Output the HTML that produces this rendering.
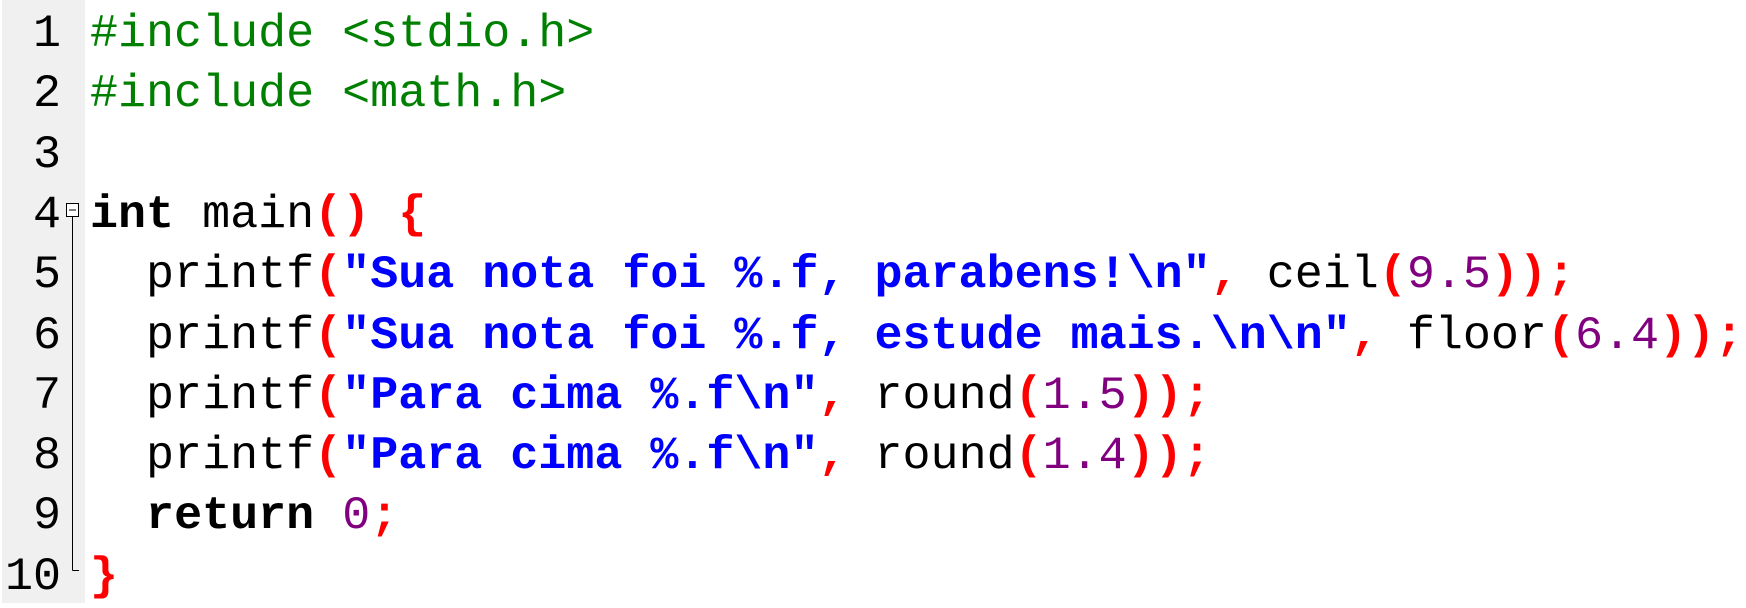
<!DOCTYPE html>
<html><head><style>
body{margin:0;width:1746px;height:603px;background:#fff;overflow:hidden;position:relative;font-family:"Liberation Mono","DejaVu Sans Mono",monospace;font-size:46.7px;}
#g{position:absolute;left:2px;top:0;width:83px;height:603px;background:#f0f0f0;}
.l{position:absolute;left:0;height:60.3px;line-height:60.3px;white-space:pre;margin-top:5px;}
.n{width:61px;text-align:right;color:#000;}
.c{left:90px;}
.p{color:#008000}.s{color:#0000ff;font-weight:bold}.o{color:#ff0000;font-weight:bold}.d{color:#800080}.k{font-weight:bold;color:#000}
</style></head><body>
<div id="g"></div>
<svg style="position:absolute;left:0;top:0" width="120" height="603"><rect x="66.5" y="203.5" width="12" height="13" fill="#fff" stroke="#000"/><line x1="69" y1="210" x2="76" y2="210" stroke="#000"/><line x1="72.5" y1="217" x2="72.5" y2="570.5" stroke="#000"/><line x1="72.5" y1="570.5" x2="79" y2="570.5" stroke="#000"/></svg>
<div class="l n" style="top:0">1</div>
<div class="l n" style="top:60.3px">2</div>
<div class="l n" style="top:120.6px">3</div>
<div class="l n" style="top:180.9px">4</div>
<div class="l n" style="top:241.2px">5</div>
<div class="l n" style="top:301.5px">6</div>
<div class="l n" style="top:361.8px">7</div>
<div class="l n" style="top:422.1px">8</div>
<div class="l n" style="top:482.4px">9</div>
<div class="l n" style="top:542.7px">10</div>
<div class="l c" style="top:0"><span class="p">#include &lt;stdio.h&gt;</span></div>
<div class="l c" style="top:60.3px"><span class="p">#include &lt;math.h&gt;</span></div>
<div class="l c" style="top:180.9px"><span class="k">int</span> main<span class="o">()</span> <span class="o">{</span></div>
<div class="l c" style="top:241.2px">  printf<span class="o">(</span><span class="s">"Sua nota foi %.f, parabens!\n"</span><span class="o">,</span> ceil<span class="o">(</span><span class="d">9.5</span><span class="o">));</span></div>
<div class="l c" style="top:301.5px">  printf<span class="o">(</span><span class="s">"Sua nota foi %.f, estude mais.\n\n"</span><span class="o">,</span> floor<span class="o">(</span><span class="d">6.4</span><span class="o">));</span></div>
<div class="l c" style="top:361.8px">  printf<span class="o">(</span><span class="s">"Para cima %.f\n"</span><span class="o">,</span> round<span class="o">(</span><span class="d">1.5</span><span class="o">));</span></div>
<div class="l c" style="top:422.1px">  printf<span class="o">(</span><span class="s">"Para cima %.f\n"</span><span class="o">,</span> round<span class="o">(</span><span class="d">1.4</span><span class="o">));</span></div>
<div class="l c" style="top:482.4px">  <span class="k">return</span> <span class="d">0</span><span class="o">;</span></div>
<div class="l c" style="top:542.7px"><span class="o">}</span></div>
</body></html>
